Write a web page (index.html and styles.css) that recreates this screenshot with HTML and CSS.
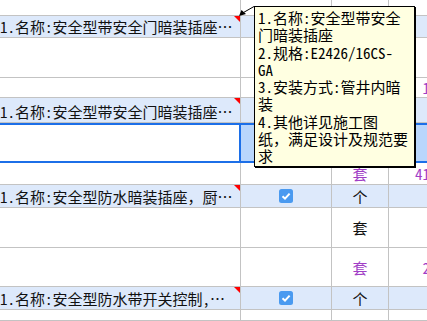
FILE: index.html
```html
<!DOCTYPE html>
<html lang="zh-CN">
<head>
    <meta charset="UTF-8">
    <meta name="viewport" content="width=device-width, initial-scale=1.0">
    <title>清单项目</title>
    <link rel="stylesheet" href="styles.css">
</head>
<body>

    <div class="sheet">
        <div class="row tall">
            <div class="cell desc"></div><div class="cell"></div><div class="cell unit"></div><div class="cell qty"></div>
        </div>
        <div class="row item">
            <div class="cell desc flag"><span class="txt">1.名称:安全型带安全门暗装插座…</span></div>
            <div class="cell"></div>
            <div class="cell unit"></div>
            <div class="cell qty"></div>
        </div>
        <div class="row tall">
            <div class="cell desc"></div><div class="cell"></div><div class="cell unit"></div><div class="cell qty"></div>
        </div>
        <div class="row short sub">
            <div class="cell desc"></div><div class="cell"></div><div class="cell unit"></div><div class="cell qty">12.00</div>
        </div>
        <div class="row item">
            <div class="cell desc flag"><span class="txt">1.名称:安全型带安全门暗装插座…</span></div>
            <div class="cell"></div>
            <div class="cell unit"></div>
            <div class="cell qty"></div>
        </div>
        <div class="row tall sel">
            <div class="cell desc"></div><div class="cell"></div><div class="cell unit"></div><div class="cell qty"></div>
        </div>
        <div class="row short sub">
            <div class="cell desc"></div><div class="cell"></div><div class="cell unit">套</div><div class="cell qty">416.00</div>
        </div>
        <div class="row item">
            <div class="cell desc flag"><span class="txt">1.名称:安全型防水暗装插座，厨…</span></div>
            <div class="cell"><span class="check"><svg width="14" height="14" viewBox="0 0 14 14"><rect width="14" height="14" rx="2.5" fill="#4a9af0"/><path d="M3.5 7.2 L6 9.6 L10.6 4.6" fill="none" stroke="#fff" stroke-width="2"/></svg></span></div>
            <div class="cell unit">个</div>
            <div class="cell qty"></div>
        </div>
        <div class="row tall">
            <div class="cell desc"></div><div class="cell"></div><div class="cell unit">套</div><div class="cell qty"></div>
        </div>
        <div class="row tall sub">
            <div class="cell desc"></div><div class="cell"></div><div class="cell unit">套</div><div class="cell qty">26.00</div>
        </div>
        <div class="row item">
            <div class="cell desc flag"><span class="txt">1.名称:安全型防水带开关控制,…</span></div>
            <div class="cell"><span class="check"><svg width="14" height="14" viewBox="0 0 14 14"><rect width="14" height="14" rx="2.5" fill="#4a9af0"/><path d="M3.5 7.2 L6 9.6 L10.6 4.6" fill="none" stroke="#fff" stroke-width="2"/></svg></span></div>
            <div class="cell unit">个</div>
            <div class="cell qty"></div>
        </div>
        <div class="row tall">
            <div class="cell desc"></div><div class="cell"></div><div class="cell unit"></div><div class="cell qty"></div>
        </div>
    </div>

    <div class="comment">1.名称:安全型带安全<br>门暗装插座<br>2.规格:E2426/16CS-<br>GA<br>3.安装方式:管井内暗<br>装<br>4.其他详见施工图<br>纸，满足设计及规范要<br>求</div>

    <svg class="pointer" width="427" height="321" viewBox="0 0 427 321">
        <line x1="254" y1="6.5" x2="243.5" y2="12.5" stroke="#000" stroke-width="1"/>
        <polygon points="239,16 241.5,10 246,14" fill="#000"/>
    </svg>

</body>
</html>
```

FILE: styles.css
```css
:root {
    --grid: #c3c3c3;
    --row-item: #dde9fb;
    --sel-line: #1c6fe8;
    --sel-fill: #b9d6fc;
    --purple: #a13ec6;
    --note-bg: #ffffe1;
}
body {
    margin: 0;
    overflow: hidden;
    height: 321px;
    background: #fff;
    color: #111;
    font-family: "Noto Sans Mono CJK SC", "Noto Sans CJK SC", monospace;
    font-size: 15px;
}
.sheet {
    display: grid;
    grid-template-columns: 241px 91px 57px 72px;
    grid-template-rows: 40px 22px 40px 20px 25px 40px 22px 23px 40px 39px 23px 11px;
    margin-top: -24px;
}
.row {
    display: contents;
}
.cell {
    box-sizing: border-box;
    border-right: 1px solid var(--grid);
    border-bottom: 1px solid var(--grid);
    display: flex;
    align-items: center;
    justify-content: center;
    min-width: 0;
    overflow: hidden;
    white-space: nowrap;
    line-height: 17px;
}
.cell.desc {
    position: relative;
    justify-content: flex-start;
    align-items: flex-end;
    padding: 0 2px 2px 0;
}
.cell.flag::after {
    content: "";
    position: absolute;
    top: 0;
    right: 0;
    border-style: solid;
    border-width: 0 6px 6px 0;
    border-color: transparent #f00 transparent transparent;
}
.cell.qty {
    justify-content: flex-end;
}
.row.item > .cell {
    background: var(--row-item);
}
.row.sub > .unit,
.row.sub > .qty {
    color: var(--purple);
}
.check {
    display: flex;
}
.row.sel > .cell {
    border-top: 2px solid var(--sel-line);
    border-bottom: 2px solid var(--sel-line);
    background: var(--sel-fill);
}
.row.sel > .desc {
    background: #fff;
    border-right: 2px solid var(--sel-line);
}
.comment {
    position: absolute;
    left: 254px;
    top: 6px;
    width: 161px;
    height: 161px;
    box-sizing: border-box;
    padding: 2px 3px;
    background: var(--note-bg);
    border: 1px solid #000;
    box-shadow: 1px 1px 0 #000;
    color: #000;
    line-height: 17.3px;
    white-space: nowrap;
}
.pointer {
    position: absolute;
    left: 0;
    top: 0;
    pointer-events: none;
}
```
